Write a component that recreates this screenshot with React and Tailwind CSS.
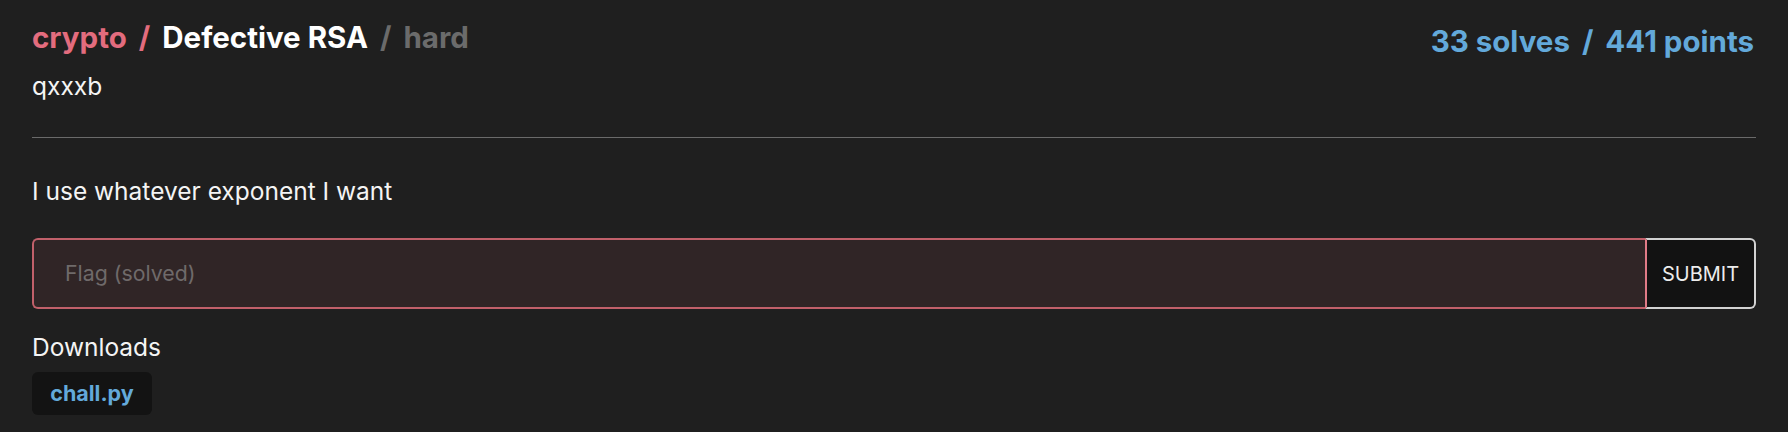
import React from "react";

export default function App() {
  return (
    <div className="min-h-screen bg-[#1f1f1f] px-8 font-['Inter','Liberation_Sans',sans-serif] text-[#f0f0f0]">
      <div className="flex items-start justify-between pt-[20px]">
        <div className="flex items-baseline text-[29.5px] font-bold leading-[34px]">
          <span className="text-[#e36c7e]">crypto</span>
          <span className="mx-3 text-[#e36c7e]">/</span>
          <span className="text-white">Defective RSA</span>
          <span className="mx-3 text-[#6b6b6b]">/</span>
          <span className="text-[#6b6b6b]">hard</span>
        </div>
        <div className="-mb-[4px] mt-[4px] flex items-baseline pr-[2px] text-[29.5px] font-bold leading-[34px] text-[#63a9da]">
          <span>33 solves</span>
          <span className="mx-3">/</span>
          <span>441 points</span>
        </div>
      </div>
      <div className="mt-[16px] text-[24.5px] leading-[32px] text-[#f4f4f4]">qxxxb</div>
      <div className="mt-[35px] h-px bg-[#6a6a6a]" />
      <div className="mt-[37px] text-[24.5px] leading-[32px] text-[#f4f4f4]">
        I use whatever exponent I want
      </div>
      <div className="mt-[31px] flex h-[71px]">
        <div className="flex flex-1 items-center rounded-l-md border-2 border-r-0 border-[#c1606a] bg-[#302526] pl-[31px]">
          <span className="text-[21.3px] text-[#6f6a6a]">Flag (solved)</span>
        </div>
        <button className="flex w-[111px] items-center justify-center rounded-r-md border-2 border-l-2 border-[#d2d2d2] border-l-[#e07b87] bg-[#121212] text-[20px] text-[#ececec]">
          SUBMIT
        </button>
      </div>
      <div className="mt-[22px] text-[24.5px] leading-[32px] text-[#f4f4f4]">Downloads</div>
      <div className="mt-[9px] flex">
        <div className="flex h-[43px] w-[120px] items-center justify-center rounded-md bg-[#131313] text-[21.5px] font-bold text-[#63a9da]">
          chall.py
        </div>
      </div>
    </div>
  );
}
